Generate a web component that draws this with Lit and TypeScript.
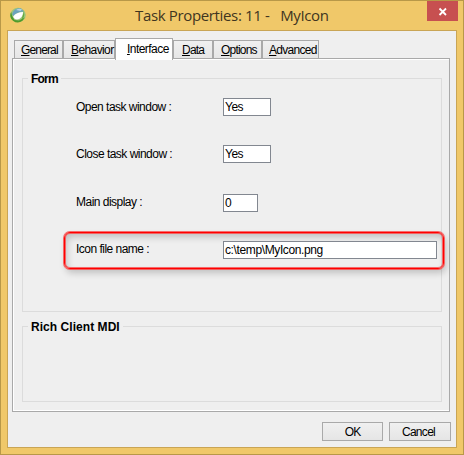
import { LitElement, html, css, svg } from "lit";
import { customElement } from "lit/decorators.js";
import { classMap } from "lit/directives/class-map.js";

const tabs = [
  { id: "general", key: "G", rest: "eneral" },
  { id: "behavior", key: "B", rest: "ehavior" },
  { id: "interface", key: "I", rest: "nterface", active: true },
  { id: "data", key: "D", rest: "ata" },
  { id: "options", key: "O", rest: "ptions" },
  { id: "advanced", key: "A", rest: "dvanced" },
];

const logo = svg`
  <ellipse cx="8" cy="8" rx="7.8" ry="7.2" fill="#9cc67c"/>
  <path d="M1.200 5A7.500 7 0 0 0 12.500 13.800L14.800 10.500L9 13.500L4.500 13L2.200 9Z" fill="#4f9c2c"/>
  <path d="M2.200 7.500C3 3 7 .8 11 1.500L14 4.500C10 4.500 6 6 3.200 9Z" fill="#6ba3bd"/>
  <path d="M6 3C8 1.500 10.500 1.500 12 2.500L10.500 4Z" fill="#b5d3dc"/>
  <path d="M3.200 9.500C5 6.500 9 5 13 5C13.200 8.500 11 12 7 12.600C5 12.500 3.700 11.500 3.200 9.500Z" fill="#fff"/>
  <path d="M13 3.500C15 6.500 14.500 10.500 11.500 13L13.700 5.500Z" fill="#62a93e"/>`;

@customElement("app-root")
export class AppRoot extends LitElement {
  static styles = css`
    :host { display: block; width: 464px; height: 455px; font: 11px/13px "Liberation Sans", Arial, sans-serif; color: #000; }
    * { box-sizing: border-box; }
    .window { height: 455px; border: 1px solid #b89848; background: #f0c869; padding: 0 6px 6px; display: flex; flex-direction: column; }
    .titlebar { height: 29px; flex: none; display: flex; align-items: flex-start; }
    .logo { width: 16px; height: 16px; margin: 6px 0 0 3px; }
    .title { flex: 1; margin: 3px 0 0 109px; font: 15px/22px "Open Sans", "Noto Sans", sans-serif; letter-spacing: -0.35px; color: #40351f; white-space: pre; }
    .close { width: 31px; height: 20px; background: #c75050; border: 0; padding: 0; margin-right: -1px; display: block; }
    .client { flex: 1; border: 1px solid #c9a555; background: #efefef; padding: 7px 6px 0 4px; display: flex; flex-direction: column; }
    .tabs { display: flex; align-items: flex-end; height: 22px; padding-left: 2px; margin-bottom: -2px; position: relative; flex: none; }
    .tab { height: 19px; margin-bottom: 1px; border: 1px solid #a9a9a9; background: linear-gradient(#f0f0f0, #e6e6e6); white-space: nowrap; line-height: 19px; font-size: 12px; }
    .tab u { text-underline-offset: 1px; text-decoration-thickness: 1px; }
    .general { width: 49px; padding-left: 6px; letter-spacing: -0.85px; }
    .behavior { width: 52px; padding-left: 7px; letter-spacing: -0.6px; }
    .interface { width: 58px; padding-left: 11px; letter-spacing: -0.55px; }
    .data { width: 40px; padding-left: 8px; letter-spacing: -0.8px; }
    .options { width: 49px; padding-left: 7px; letter-spacing: -0.8px; }
    .advanced { width: 57px; padding-left: 6px; letter-spacing: -0.7px; }
    .active { height: 22px; margin-bottom: 0; background: #fff; border-bottom: 0; line-height: 20px; }
    .panel { width: 438px; height: 354px; border: 1px solid #a9a9a9; box-shadow: inset 1px 1px #fff, inset 0 -1px #fff; padding: 12px 7px 0 9px; flex: none; }
    .group { width: 420px; min-width: 0; margin: 0; padding: 0; border: 1px solid #dcdcdc; display: flow-root; }
    .form { height: 241px; }
    .rich { height: 83px; margin-top: 7px; }
    legend { margin-left: 5px; padding: 0 3px; height: 15px; line-height: 17px; font-weight: bold; font-size: 12px; white-space: nowrap; }
    .form legend { letter-spacing: -0.8px; }
    .rich legend { letter-spacing: 0.05px; }
    .row { display: flex; margin-left: 53px; height: 18px; }
    .r1 { margin-top: 12px; } .r2 { margin-top: 29px; } .r3 { margin-top: 31px; }
    .label { width: 147px; line-height: 18px; font-size: 12px; white-space: nowrap; letter-spacing: -0.52px; }
    .r3 .label { line-height: 16px; }
    .field { width: 48px; height: 18px; border: 1px solid #828790; background: #fff; line-height: 16px; padding-left: 1px; font-size: 12px; letter-spacing: -0.5px; }
    .short { width: 35px; }
    .long { width: 214px; letter-spacing: -0.38px; }
    .mark { margin: 20px 0 0 41px; width: 380px; height: 37px; border: 1px solid #f00; border-radius: 6px; padding-top: 8px; box-shadow: 0 0 0 1px #fa4a4acc, inset 0 0 0 1px #fa4a4acc, 2px 4px 7px #0003, inset 2px 4px 7px #0003; }
    .mark .row { margin-left: 11px; }
    .mark .label { line-height: 16px; }
    .actions { display: flex; justify-content: flex-end; gap: 6px; margin: 10px -1px 0 0; }
    .btn { height: 19px; border: 1px solid #a9a9a9; background: linear-gradient(#f0f0f0, #e5e5e5); padding: 0; font: 12px/19px "Liberation Sans", Arial, sans-serif; color: #000; }
    .ok { width: 61px; letter-spacing: -0.8px; }
    .cancel { width: 62px; letter-spacing: -0.7px; padding-right: 3px; }
  `;

  private row(cls: string, label: string, value: string, size = "") {
    return html`<div class="row ${cls}"><span class="label">${label}</span><div class="field ${size}">${value}</div></div>`;
  }

  render() {
    return html`<div class="window">
      <div class="titlebar">
        <svg class="logo" viewBox="0 0 16 16">${logo}</svg>
        <div class="title">Task Properties: 11 -   MyIcon</div>
        <button class="close" aria-label="Close"><svg width="31" height="20"><path d="M12.500 7.500L19 14M19 7.500L12.500 14" stroke="#fff" stroke-width="1.8"/></svg></button>
      </div>
      <div class="client">
        <div class="tabs">
          ${tabs.map((t) => html`<div class=${classMap({ tab: true, [t.id]: true, active: !!t.active })}><u>${t.key}</u>${t.rest}</div>`)}
        </div>
        <div class="panel">
          <fieldset class="group form"><legend>Form</legend>
            ${this.row("r1", "Open task window :", "Yes")}
            ${this.row("r2", "Close task window :", "Yes")}
            ${this.row("r3", "Main display :", "0", "short")}
            <div class="mark">${this.row("", "Icon file name :", "c:\\temp\\MyIcon.png", "long")}</div>
          </fieldset>
          <fieldset class="group rich"><legend>Rich Client MDI</legend></fieldset>
        </div>
        <div class="actions"><button class="btn ok">OK</button><button class="btn cancel">Cancel</button></div>
      </div>
    </div>`;
  }
}
